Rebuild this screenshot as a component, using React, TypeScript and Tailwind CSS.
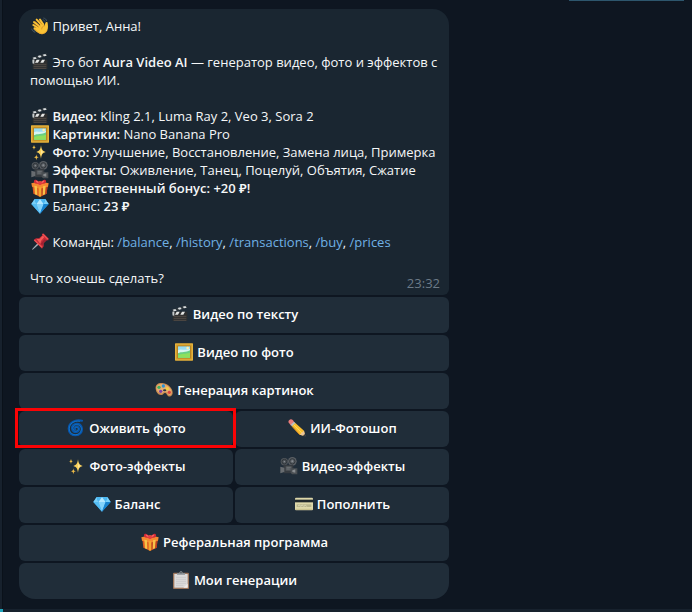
import { ReactNode } from "react";
import clsx from "clsx";

function Emoji({ children, label }: { children: ReactNode; label: string }) {
    return (
        <svg viewBox="0 0 54 54" role="img" aria-label={label} className="ml-px inline-block size-[18px] shrink-0 align-top">
            {children}
        </svg>
    )
}

const Wave = () => (
    <Emoji label="wave">
        <g stroke="#fbc336" strokeWidth="6" strokeLinecap="round" fill="none">
            <path d="M24 34 7 24" />
            <path d="M26 28 9 15" />
            <path d="M32 24 17 8" />
            <path d="M37 23 27 8" />
        </g>
        <path d="M12 31c-4-2-6 3-3 6 4 5 10 10 17 13 10 4 20-1 23-10 3-8 2-14 1-22 0-4-6-4-7 0l-2 8-5-7-19 13Z" fill="#fbc336" />
        <path d="M41 26c-6 1-9 5-9 10M9 20l13 10M14 14l13 13M22 9l11 13" stroke="#cf8420" strokeWidth="2" fill="none" strokeLinecap="round" />
        <path d="M12 37c5 5 9 9 16 12 9 3 17-2 20-9" stroke="#e59c27" strokeWidth="2" fill="none" />
        <path d="M37 3c6 1 9 4 10 9M35 8c4 1 6 3 7 6M2 35c1 6 5 10 11 11M7 37c1 3 3 5 6 5" stroke="#526572" strokeWidth="2" fill="none" />
    </Emoji>
)

const Clapper = () => (
    <Emoji label="clapper">
        <path d="M3 14 47 1 49 8 5 21Z" fill="#30383e" />
        <path d="m5 14 8-2 4 5-8 2ZM20 9l8-2 4 5-8 2ZM35 5l8-2 4 5-8 2Z" fill="#d9dddf" />
        <path d="M5 20h44v28H5Z" fill="#2d2e2f" />
        <path d="m5 20 5 0-3 9H5ZM17 20h9l-5 9h-9ZM33 20h9l-5 9h-9Z" fill="#e4e5e4" />
        <path d="M5 20h5v12H5Z" fill="#c5cacc" />
        <path d="M8 34h38M8 40h38M8 46h38" stroke="#625a52" strokeWidth="2" />
    </Emoji>
)

const Picture = () => (
    <Emoji label="picture">
        <path d="M0 1h54v52H0Z" fill="#d49d2b" />
        <path d="M2 3h50v48H2Z" fill="none" stroke="#f0c34e" strokeWidth="2" />
        <path d="M7 8h40v38H7Z" fill="#a8791e" />
        <path d="M9 10h36v34H9Z" fill="#9addf2" />
        <path d="M9 22c8-7 18 2 36-4v14H9Z" fill="#d9f5f1" />
        <path d="M9 31c10-6 24-1 36-9v22H9Z" fill="#69cf83" />
        <path d="M9 37c12-7 21-3 36-8v15H9Z" fill="#8de05d" />
        <circle cx="38" cy="15" r="4" fill="#fff1ae" />
    </Emoji>
)

const Sparkles = () => (
    <Emoji label="sparkles">
        <path d="M30 7c2 13 4 17 14 20-10 3-12 7-14 20-2-13-4-17-14-20 10-3 12-7 14-20Z" fill="#fbd15b" />
        <path d="M30 15c1 8 3 10 8 12-5 2-7 4-8 12Z" fill="#ffe79a" />
        <path d="M9 5c1 6 2 7 7 8-5 1-6 2-7 8-1-6-2-7-7-8 5-1 6-2 7-8ZM16 34c1 7 2 8 8 9-6 1-7 3-8 9-1-6-2-8-8-9 6-1 7-2 8-9Z" fill="#f0bd48" />
    </Emoji>
)

const Camera = () => (
    <Emoji label="camera">
        <circle cx="13" cy="14" r="11" fill="#51565b" />
        <circle cx="37" cy="13" r="13" fill="#5a5f64" />
        <circle cx="13" cy="14" r="7" fill="none" stroke="#30363b" strokeWidth="3" />
        <circle cx="37" cy="13" r="8" fill="none" stroke="#30363b" strokeWidth="3" />
        <circle cx="13" cy="14" r="2" fill="#92979b" />
        <circle cx="37" cy="13" r="3" fill="#858a8f" />
        <path d="M10 23h30v23l-6 3H12Z" fill="#363b40" />
        <path d="M1 29 13 32v13L1 49Z" fill="#686c70" />
        <path d="M17 28h18v13H17Z" fill="#565a5e" />
        <path d="M32 34h20v18H36l-4-5Z" fill="#4a4f53" />
        <path d="m37 40 9-3v10l-9-2Z" fill="#898d90" />
        <path d="M20 31h12M20 36h9" stroke="#777c80" strokeWidth="2" />
    </Emoji>
)

const Gift = () => (
    <Emoji label="gift">
        <path d="M4 18 27 24 50 18 47 44 27 53 7 44Z" fill="#de5b21" />
        <path d="M27 24 50 18 47 44 27 53Z" fill="#bd3f1e" />
        <path d="M1 13 27 7 53 13 51 23 27 29 3 23Z" fill="#f58a31" />
        <path d="m10 20 8 2 1 27-7-3ZM36 22l8-2-2 26-7 3Z" fill="#f7c147" />
        <path d="m23 25 8 0v27l-4 1-4-1Z" fill="#f4a730" />
        <path d="M27 14C18-2 7 1 9 9c2 6 10 6 18 5ZM27 14C36-2 47 1 45 9c-2 6-10 6-18 5Z" fill="#d52936" />
        <path d="M14 6c5-2 8 2 11 6-6 0-10-1-11-6ZM40 6c-5-2-8 2-11 6 6 0 10-1 11-6Z" fill="#f46462" />
        <path d="m22 10 5-3 5 3-1 8h-8Z" fill="#e33c42" />
    </Emoji>
)

const Diamond = () => (
    <Emoji label="diamond">
        <path d="M11 6h32l10 15-26 29L1 21Z" fill="#2799e4" />
        <path d="M11 6 1 21h15ZM43 6l10 15H38Z" fill="#79cff8" />
        <path d="m11 6 16 0-11 15ZM43 6H27l11 15Z" fill="#4cb8f2" />
        <path d="M27 6 16 21h22Z" fill="#b4e8ff" />
        <path d="M1 21h15l11 29Z" fill="#55bdf3" />
        <path d="M16 21h22L27 50Z" fill="#82d2fa" />
        <path d="M53 21H38L27 50Z" fill="#1782cd" />
    </Emoji>
)

const Pin = () => (
    <Emoji label="pin">
        <path d="M21 29 3 49l2 1 20-17Z" fill="#a7b1b8" />
        <path d="m8 21 7-5 9 0 10-9-1-5 5 0 15 15-1 5-5 0-9 9 0 9-5 7Z" fill="#c52b38" />
        <path d="m17 18 9 0 9-10 5 4-10 12-2 9Z" fill="#f25b57" />
        <path d="m35 3 16 16M10 21l23 22" stroke="#ed5152" strokeWidth="4" />
        <path d="m29 32 11-13 7 3-11 9-1 7Z" fill="#9f2031" />
    </Emoji>
)

const Palette = () => (
    <Emoji label="palette">
        <path d="M2 24C0 9 13 4 26 7c15 3 26 15 27 27 1 10-8 16-14 11-5-4-4-10-10-9-5 1-4 7-11 6C8 41 3 34 2 24Z" fill="#c98a50" />
        <path d="M4 22C4 10 15 7 26 10c13 3 23 13 24 23 0 7-5 11-9 8-5-4-5-10-13-9-5 1-5 6-10 5C10 36 5 30 4 22Z" fill="#e5ae70" />
        <circle cx="12" cy="19" r="5" fill="#3daf61" />
        <circle cx="25" cy="15" r="5" fill="#2c91d4" />
        <circle cx="37" cy="23" r="5" fill="#f3cf42" />
        <circle cx="43" cy="34" r="5" fill="#dc4540" />
        <circle cx="17" cy="31" r="5" fill="#8240a7" />
        <ellipse cx="29" cy="28" rx="5" ry="3" fill="#293743" />
    </Emoji>
)

const Cyclone = () => (
    <Emoji label="cyclone">
        <g fill="none" strokeLinecap="round">
            <path d="M45 5C25 0 5 11 5 29c0 13 10 20 21 20 12 0 20-9 19-20C44 19 37 13 28 14c-9 1-14 8-13 15 1 7 7 11 13 10 6-1 9-6 8-11-1-5-6-7-10-5-4 1-5 6-1 8" stroke="#0756ad" strokeWidth="6" />
            <path d="M38 7C20 4 7 15 7 29c0 11 8 18 19 18 10 0 17-8 17-17 0-8-7-13-15-13-7 0-11 6-10 12 1 5 6 8 10 7 4-1 6-4 5-8-1-3-4-4-7-2" stroke="#1684dc" strokeWidth="2" />
        </g>
    </Emoji>
)

const Pencil = () => (
    <Emoji label="pencil">
        <path d="M4 3c3-4 8-3 11 1l5 7-11 9-6-8C0 9 1 6 4 3Z" fill="#e97c7b" />
        <path d="m8 17 10-9 5 5-10 10Z" fill="#b5bec4" />
        <path d="m12 22 10-10 26 23 3 16-16-4Z" fill="#f9bd30" />
        <path d="M12 22l23 25" stroke="#d78b21" strokeWidth="3" />
        <path d="m17 17 25 25" stroke="#ffdb55" strokeWidth="3" />
        <path d="m35 47 13-12 4 17Z" fill="#edc69a" />
        <path d="m45 50 5-5 2 7Z" fill="#353638" />
    </Emoji>
)

const Card = () => (
    <Emoji label="card">
        <rect x="0" y="8" width="54" height="38" rx="3" fill="#ded8aa" />
        <path d="M0 14h54v8H0Z" fill="#20282c" />
        <path d="M5 28h44v8H5Z" fill="#b8b58c" />
        <path d="m9 33 5-3 3 4 5-4 4 4 5-3 4 3" stroke="#eeeac8" strokeWidth="2" fill="none" />
        <path d="M2 43h50" stroke="#bab279" strokeWidth="2" />
    </Emoji>
)

const Clipboard = () => (
    <Emoji label="clipboard">
        <rect x="3" y="5" width="48" height="49" rx="3" fill="#9c755b" />
        <path d="M7 9h40v41H7Z" fill="#dcdbdb" />
        <path d="M12 19h30M12 25h30M12 31h30M12 37h30M12 43h22" stroke="#c2c3c6" strokeWidth="2" />
        <path d="M15 6h7c0-7 10-7 10 0h7v5H15Z" fill="#8a9195" />
        <circle cx="27" cy="5" r="2" fill="#343c41" />
        <path d="m34 50 13-12v12Z" fill="#f0edeb" />
    </Emoji>
)

function Command({ name }: { name: string }) {
    return <a href={`#${name}`} className="text-[#70b1e5]">/{name}</a>
}

function KeyButton({ icon, text, wide, last, marked }: {
    icon: ReactNode
    text: string
    wide?: boolean
    last?: boolean
    marked?: boolean
}) {
    return (
        <button
            type="button"
            className={clsx(
                "relative flex h-9 cursor-pointer items-center justify-center gap-1 rounded-md bg-[#202d39] pb-0.5 font-semibold text-white hover:bg-[#283643]",
                wide && "col-span-2",
                last && "rounded-b-2xl"
            )}
        >
            {icon}
            <span>{text}</span>
            {marked && <span className="pointer-events-none absolute -top-[3px] -right-[3px] -bottom-px -left-1 z-10 border-3 border-[#fb0305]" />}
        </button>
    )
}

export default function App() {
    return (
        <div className="flex min-h-screen flex-col bg-[#0e1621] font-['Open_Sans','Noto_Sans',sans-serif] text-[13px] leading-[18px] text-[#f5f7f8]">
            <div className="flex flex-1">
                <div className="w-[3px] border-r border-[#0a111a] bg-[#17212d]" />
                <main className="min-w-0 flex-1">
                    <div className="flex justify-end pr-2">
                        <div className="h-px w-[115px] bg-[#2d566d]" />
                    </div>
                    <div className="max-w-[446px] pt-2 pb-2.5 pl-4">
                        <section className="rounded-t-2xl rounded-b-md bg-[#1a2631] pt-2 pr-[9px] pb-[3px] pl-[11px]">
                            <p><Wave /> Привет, Анна!</p>
                            <p className="mt-[18px]">
                                <Clapper /> Это бот <b className="font-semibold">Aura Video AI</b> — генератор видео, фото и эффектов с помощью ИИ.
                            </p>
                            <div className="mt-[18px]">
                                <p><Clapper /> <b className="font-semibold">Видео:</b> Kling 2.1, Luma Ray 2, Veo 3, Sora 2</p>
                                <p><Picture /> <b className="font-semibold">Картинки:</b> Nano Banana Pro</p>
                                <p><Sparkles /> <b className="font-semibold">Фото:</b> Улучшение, Восстановление, Замена лица, Примерка</p>
                                <p><Camera /> <b className="font-semibold">Эффекты:</b> Оживление, Танец, Поцелуй, Объятия, Сжатие</p>
                                <p><Gift /> <b className="font-semibold">Приветственный бонус: +20 ₽!</b></p>
                                <p><Diamond /> Баланс: <b className="font-semibold">23 ₽</b></p>
                            </div>
                            <p className="mt-[18px]">
                                <Pin /> Команды: <Command name="balance" />, <Command name="history" />, <Command name="transactions" />, <Command name="buy" />, <Command name="prices" />
                            </p>
                            <div className="mt-[18px] flex items-start justify-between">
                                <p>Что хочешь сделать?</p>
                                <time className="mt-[5px] text-[#6c7a87]">23:32</time>
                            </div>
                        </section>
                        <div className="mt-0.5 grid grid-cols-2 gap-0.5">
                            <KeyButton wide icon={<Clapper />} text="Видео по тексту" />
                            <KeyButton wide icon={<Picture />} text="Видео по фото" />
                            <KeyButton wide icon={<Palette />} text="Генерация картинок" />
                            <KeyButton marked icon={<Cyclone />} text="Оживить фото" />
                            <KeyButton icon={<Pencil />} text="ИИ-Фотошоп" />
                            <KeyButton icon={<Sparkles />} text="Фото-эффекты" />
                            <KeyButton icon={<Camera />} text="Видео-эффекты" />
                            <KeyButton icon={<Diamond />} text="Баланс" />
                            <KeyButton icon={<Card />} text="Пополнить" />
                            <KeyButton wide icon={<Gift />} text="Реферальная программа" />
                            <KeyButton wide last icon={<Clipboard />} text="Мои генерации" />
                        </div>
                    </div>
                </main>
            </div>
            <footer className="flex h-[3px] bg-[#17212d]">
                <div className="w-[3px] bg-[#20a5bd]" />
            </footer>
        </div>
    )
}
